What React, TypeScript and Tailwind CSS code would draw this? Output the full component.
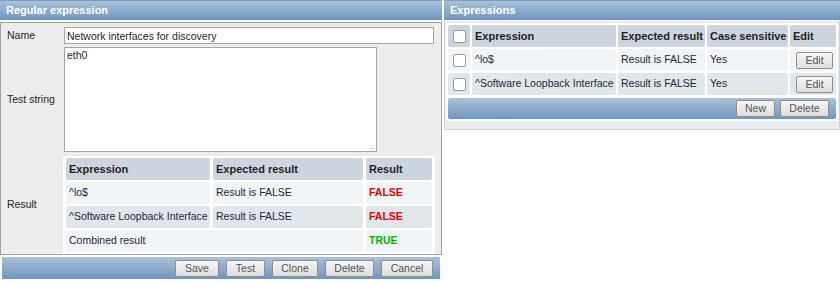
const HEAD = 'bg-linear-to-b from-[#a9c1da] to-[#6f96c0]';
const BTN =
  'h-[17px] rounded-[2px] border border-[#8e8e8e] bg-linear-to-b from-[#f6f6f6] to-[#dcdcdc] text-[10.5px] leading-[15px] text-[#555] text-center';

const ROW_LIGHT = 'bg-[#f1f4f7]';
const ROW_DARK = 'bg-[#e1e6eb]';
const TH = 'bg-[#ccd4dd] rounded-[2px] text-left font-bold text-[11px] text-[#1f1f1f] pl-[3px] h-[22px]';
const TD = 'rounded-[2px] pl-[3px] h-[22px] text-[10.5px]';
const INK = 'text-[#1f2733]';

function Box() {
  return <span className="block h-[13px] w-[13px] rounded-[2px] border border-[#9a9a9a] bg-white" />;
}

function PanelHeader({ title }: { title: string }) {
  return (
    <div className={`${HEAD} flex h-[20px] items-center border-t border-[#7e9ec4] px-[6px] text-[11px] font-bold text-white`}>
      {title}
    </div>
  );
}

function RegexForm() {
  const results = [
    { expr: '^lo$', expected: 'Result is FALSE', res: 'FALSE', bg: ROW_LIGHT },
    { expr: '^Software Loopback Interface', expected: 'Result is FALSE', res: 'FALSE', bg: ROW_DARK },
  ];
  return (
    <div className="flex w-[442px] flex-col">
      <PanelHeader title="Regular expression" />
      <div className="mt-[2px] border border-[#a3a3a3] bg-[#ececec] pt-[4px] pl-[6px]">
        <div className="grid grid-cols-[56px_1fr] text-[10.5px] text-[#1f1f1f]">
          <div className="flex items-center">Name</div>
          <div className="pl-px">
            <input
              readOnly
              value="Network interfaces for discovery"
              className="h-[17px] w-[370px] border border-[#a6a69e] bg-white px-[2px] text-[10.5px] text-[#1f1f1f] outline-none"
            />
          </div>
          <div className="flex items-center pt-[4px]">Test string</div>
          <div className="relative mt-[3px] w-[314px] pl-px">
            <textarea
              readOnly
              value="eth0"
              className="block h-[105px] w-[313px] resize-none border border-[#a6a69e] bg-white px-[2px] py-px text-[10.5px] leading-[12px] text-[#1f1f1f] outline-none"
            />
            <span className="absolute right-[3px] bottom-[1px] text-[8px] leading-[8px] text-[#777]">.:</span>
          </div>
          <div className="flex items-center pt-[4px]">Result</div>
          <div className="mt-[4px]">
            <table className="w-[372px] border-separate border-spacing-x-[3px] border-spacing-y-[2px] bg-white">
              <thead>
                <tr>
                  <th className={`${TH} w-[144px]`}>Expression</th>
                  <th className={`${TH} w-[150px]`}>Expected result</th>
                  <th className={TH}>Result</th>
                </tr>
              </thead>
              <tbody>
                {results.map((r) => (
                  <tr key={r.expr}>
                    <td className={`${TD} ${INK} ${r.bg}`}>{r.expr}</td>
                    <td className={`${TD} ${INK} ${r.bg}`}>{r.expected}</td>
                    <td className={`${TD} ${r.bg} font-bold text-[#e00000]`}>{r.res}</td>
                  </tr>
                ))}
                <tr>
                  <td colSpan={2} className={`${TD} ${INK} ${ROW_LIGHT}`}>
                    Combined result
                  </td>
                  <td className={`${TD} ${ROW_LIGHT} font-bold text-[#00b400]`}>TRUE</td>
                </tr>
              </tbody>
            </table>
          </div>
        </div>
      </div>
      <div className={`${HEAD} mx-[2px] mt-[2px] flex h-[22px] items-center justify-end gap-[7px] pr-[7px]`}>
        <button className={`${BTN} w-[44px]`}>Save</button>
        <button className={`${BTN} w-[39px]`}>Test</button>
        <button className={`${BTN} w-[46px]`}>Clone</button>
        <button className={`${BTN} w-[49px]`}>Delete</button>
        <button className={`${BTN} w-[52px]`}>Cancel</button>
      </div>
    </div>
  );
}

function ExpressionList() {
  const rows = [
    { expr: '^lo$', bg: ROW_LIGHT },
    { expr: '^Software Loopback Interface', bg: ROW_DARK },
  ];
  return (
    <div className="flex w-[396px] flex-col">
      <PanelHeader title="Expressions" />
      <div className="mt-px border-x border-b border-[#d0d4d8] bg-[#e9ecef] px-px pt-[2px] pb-[8px]">
        <table className="w-[392px] border-separate border-spacing-x-[2px] border-spacing-y-[2px] bg-white">
          <thead>
            <tr>
              <th className={`${TH} w-[22px] pl-[5px]`}>
                <Box />
              </th>
              <th className={`${TH} w-[144px]`}>Expression</th>
              <th className={`${TH} w-[87px]`}>Expected result</th>
              <th className={`${TH} w-[81px]`}>Case sensitive</th>
              <th className={TH}>Edit</th>
            </tr>
          </thead>
          <tbody>
            {rows.map((r) => (
              <tr key={r.expr}>
                <td className={`${TD} ${INK} ${r.bg} pl-[5px]`}>
                  <Box />
                </td>
                <td className={`${TD} ${INK} ${r.bg}`}>{r.expr}</td>
                <td className={`${TD} ${INK} ${r.bg}`}>Result is FALSE</td>
                <td className={`${TD} ${INK} ${r.bg}`}>Yes</td>
                <td className={`${TD} ${r.bg} pl-0 text-center`}>
                  <button className={`${BTN} w-[37px]`}>Edit</button>
                </td>
              </tr>
            ))}
            <tr>
              <td colSpan={5} className="p-0">
                <div className={`${HEAD} mt-px flex h-[21px] items-center justify-end gap-[5px] rounded-[2px] pr-[7px]`}>
                  <button className={`${BTN} w-[39px]`}>New</button>
                  <button className={`${BTN} w-[49px]`}>Delete</button>
                </div>
              </td>
            </tr>
          </tbody>
        </table>
      </div>
    </div>
  );
}

export default function App() {
  return (
    <div className="flex h-[281px] w-[840px] items-start gap-[2px] bg-white font-['Liberation_Sans',Arial,sans-serif]">
      <RegexForm />
      <ExpressionList />
    </div>
  );
}
